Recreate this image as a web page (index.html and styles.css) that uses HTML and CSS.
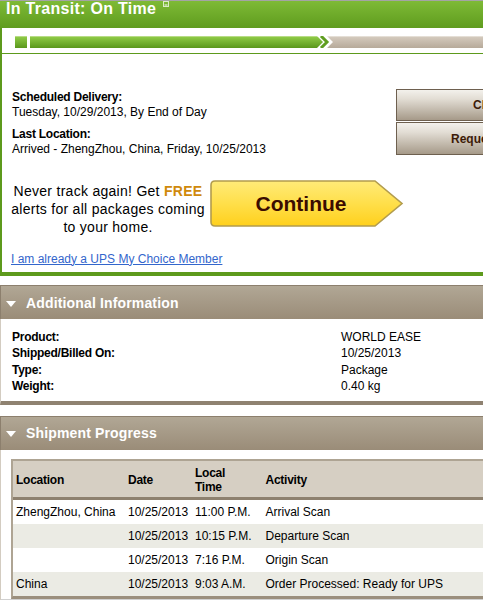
FILE: index.html
```html
<!DOCTYPE html>
<html>
<head>
<meta charset="utf-8">
<link rel="stylesheet" href="styles.css">
</head>
<body>
<div class="page">
  <div class="track">
    <div class="track-head">
      <span class="track-title">In Transit: On Time</span>
      <svg class="head-icon" width="7" height="7" viewBox="0 0 7 7"><rect x="0.5" y="0.5" width="5" height="5" fill="none" stroke="#dcebc8" stroke-width="1"/><rect x="1.5" y="3" width="3" height="2" fill="#b9d89a"/></svg>
    </div>
    <div class="track-body">
      <div class="progress">
        <svg width="640" height="12" viewBox="0 0 640 12">
          <defs>
            <linearGradient id="gg" x1="0" y1="0" x2="0" y2="1">
              <stop offset="0" stop-color="#cfe6a8"/>
              <stop offset="0.12" stop-color="#8cc844"/>
              <stop offset="1" stop-color="#5a971c"/>
            </linearGradient>
            <linearGradient id="gr" x1="0" y1="0" x2="0" y2="1">
              <stop offset="0" stop-color="#eeeae3"/>
              <stop offset="0.12" stop-color="#d2c8bb"/>
              <stop offset="1" stop-color="#b7aa9a"/>
            </linearGradient>
          </defs>
          <rect x="0" y="0" width="12" height="12" fill="url(#gg)"/>
          <polygon points="15,0 302,0 308,6 302,12 15,12" fill="url(#gg)"/>
          <polyline points="306,0 312,6 306,12" fill="none" stroke="#5f9d20" stroke-width="3"/>
          <polygon points="312,0 640,0 640,12 312,12 318,6" fill="url(#gr)"/>
        </svg>
      </div>
      <div class="details">
        <div class="details-text">
          <div class="detail-block">
            <div class="detail-label">Scheduled Delivery:</div>
            <div>Tuesday, 10/29/2013, By End of Day</div>
          </div>
          <div class="detail-block">
            <div class="detail-label">Last Location:</div>
            <div>Arrived - ZhengZhou, China, Friday, 10/25/2013</div>
          </div>
        </div>
        <div class="actions">
          <div class="action">Change Delivery</div>
          <div class="action action-tall">Request Status Updates</div>
        </div>
      </div>
      <div class="promo">
        <div class="promo-text">Never track again! Get <span class="free">FREE</span><br>alerts for all packages coming<br>to your home.</div>
        <svg class="continue" width="196" height="48" viewBox="0 0 196 48">
          <defs>
            <linearGradient id="yg" x1="0" y1="0" x2="0" y2="1">
              <stop offset="0" stop-color="#ffea78"/>
              <stop offset="0.5" stop-color="#ffdf4a"/>
              <stop offset="1" stop-color="#ffd01c"/>
            </linearGradient>
          </defs>
          <path d="M5,1 H165 L192,23.5 L165,46 H5 Q1,46 1,42 V5 Q1,1 5,1 Z" fill="url(#yg)" stroke="#b29c4e" stroke-width="1.6"/>
          <text x="91" y="31" text-anchor="middle" class="continue-label">Continue</text>
        </svg>
      </div>
      <div class="member"><a class="member-link" href="#">I am already a UPS My Choice Member</a></div>
    </div>
  </div>

  <div class="panel panel-info">
    <div class="panel-head">
      <svg width="10" height="6" viewBox="0 0 10 6" class="tri"><polygon points="0,0 10,0 5,6" fill="#fff"/></svg>
      <span>Additional Information</span>
    </div>
    <div class="info">
      <div class="info-row"><span class="info-label">Product:</span><span>WORLD EASE</span></div>
      <div class="info-row"><span class="info-label">Shipped/Billed On:</span><span>10/25/2013</span></div>
      <div class="info-row"><span class="info-label">Type:</span><span>Package</span></div>
      <div class="info-row"><span class="info-label">Weight:</span><span>0.40 kg</span></div>
    </div>
  </div>

  <div class="panel panel-progress">
    <div class="panel-head">
      <svg width="10" height="6" viewBox="0 0 10 6" class="tri"><polygon points="0,0 10,0 5,6" fill="#fff"/></svg>
      <span>Shipment Progress</span>
    </div>
    <div class="progress-body">
      <table class="scan-table">
        <thead>
          <tr>
            <th class="c-loc">Location</th>
            <th class="c-date">Date</th>
            <th class="c-time">Local<br>Time</th>
            <th class="c-act">Activity</th>
          </tr>
        </thead>
        <tbody>
          <tr><td>ZhengZhou, China</td><td>10/25/2013</td><td>11:00 P.M.</td><td>Arrival Scan</td></tr>
          <tr class="alt"><td></td><td>10/25/2013</td><td>10:15 P.M.</td><td>Departure Scan</td></tr>
          <tr><td></td><td>10/25/2013</td><td>7:16 P.M.</td><td>Origin Scan</td></tr>
          <tr class="alt"><td>China</td><td>10/25/2013</td><td>9:03 A.M.</td><td>Order Processed: Ready for UPS</td></tr>
        </tbody>
      </table>
    </div>
  </div>
</div>
</body>
</html>
```

FILE: styles.css
```css
html, body {
  margin: 0;
  padding: 0;
  overflow: hidden;
  background: #fff;
}

body {
  width: 483px;
  height: 600px;
  font-family: "Liberation Sans", Arial, sans-serif;
  font-size: 12px;
  color: #000;
}

.page {
  width: 660px;
  border-top: 1px solid #a4a4a4;
}

/* ---------- tracking status ---------- */
.track-head {
  height: 27px;
  background: linear-gradient(#7eba36, #5f9c1e);
  color: #fff;
  font-weight: bold;
  font-size: 16px;
  line-height: 16px;
  letter-spacing: 0.3px;
  padding-left: 6px;
  display: flex;
  align-items: flex-start;
}

.head-icon {
  display: block;
  margin-left: 7px;
}

.track-body {
  border-left: 2px solid #5d9a1c;
  border-bottom: 4px solid #5d9a1c;
}

.progress {
  height: 12px;
  padding: 8px 0 5px 13px;
  border-bottom: 1px solid #5d9a1c;
}

.progress svg {
  display: block;
}

.details {
  display: flex;
  padding-top: 35px;
}

.details-text {
  box-sizing: border-box;
  width: 394px;
  padding: 1px 0 0 10px;
  line-height: 14.5px;
}

.detail-label {
  font-weight: bold;
  letter-spacing: -0.25px;
}

.detail-block + .detail-block {
  margin-top: 8px;
}

.actions {
  display: flex;
  flex-direction: column;
  gap: 1px;
}

.action {
  box-sizing: border-box;
  width: 248px;
  height: 32px;
  border: 1px solid #6e604f;
  background: linear-gradient(#f3f1ec, #e2ddd4 30%, #a69a89);
  color: #3d1b08;
  font-weight: bold;
  font-size: 12px;
  display: flex;
  align-items: center;
  justify-content: center;
}

.action-tall {
  height: 33px;
}

.promo {
  display: flex;
  align-items: flex-start;
  margin-top: 24px;
  padding-left: 4px;
}

.promo-text {
  width: 204px;
  text-align: center;
  font-size: 14px;
  line-height: 18px;
  letter-spacing: 0.28px;
  padding-top: 2px;
}

.free {
  color: #cf890b;
  font-weight: bold;
}

.continue {
  display: block;
}

.continue-label {
  font-family: "Liberation Sans", Arial, sans-serif;
  font-weight: bold;
  font-size: 21px;
  fill: #3b0c00;
}

.member {
  padding: 15.5px 0 6px 9px;
  line-height: 14px;
}

.member-link {
  color: #3366cc;
  text-decoration: underline;
}

/* ---------- panels ---------- */
.panel-info {
  margin-top: 9.5px;
}

.panel-progress {
  margin-top: 11px;
}

.panel-head {
  box-sizing: border-box;
  height: 34px;
  border-top: 1px solid #8c7f6d;
  border-left: 1px solid #8c7f6d;
  background: linear-gradient(#b1a795, #9a8c78);
  color: #fff;
  font-weight: bold;
  font-size: 14px;
  letter-spacing: 0.15px;
  display: flex;
  align-items: center;
  padding-left: 5px;
  gap: 10px;
}

.tri {
  display: block;
  margin-top: 2px;
}

.info {
  border-left: 1px solid #d3ccc1;
  border-bottom: 4px solid #8f8271;
  padding: 10px 0 6.8px 11px;
}

.info-row {
  display: flex;
  line-height: 16.3px;
}

.info-label {
  width: 329px;
  font-weight: bold;
  letter-spacing: -0.25px;
}

.progress-body {
  border-left: 1px solid #d3ccc1;
  border-bottom: 4px solid #d0d0d0;
  padding: 9px 0 0 10px;
}

.scan-table {
  table-layout: fixed;
  width: 640px;
  border-spacing: 0;
  border: 2px solid #aea493;
  border-bottom: 3px solid #9b8f7d;
  font-size: 12px;
}

.scan-table th,
.scan-table td {
  box-sizing: border-box;
  padding: 0 3px;
  text-align: left;
  white-space: nowrap;
}

.scan-table th {
  height: 39px;
  background: #d6cfc3;
  font-weight: bold;
  letter-spacing: -0.25px;
  line-height: 14px;
  padding-top: 2px;
  border-bottom: 3px solid #8e816f;
}

.scan-table td {
  height: 24px;
  line-height: 14px;
}

.scan-table tr.alt td {
  background: #ebebe4;
}

.c-loc { width: 112px; }
.c-date { width: 67px; }
.c-time { width: 70.5px; }
.c-act { width: auto; }
```
